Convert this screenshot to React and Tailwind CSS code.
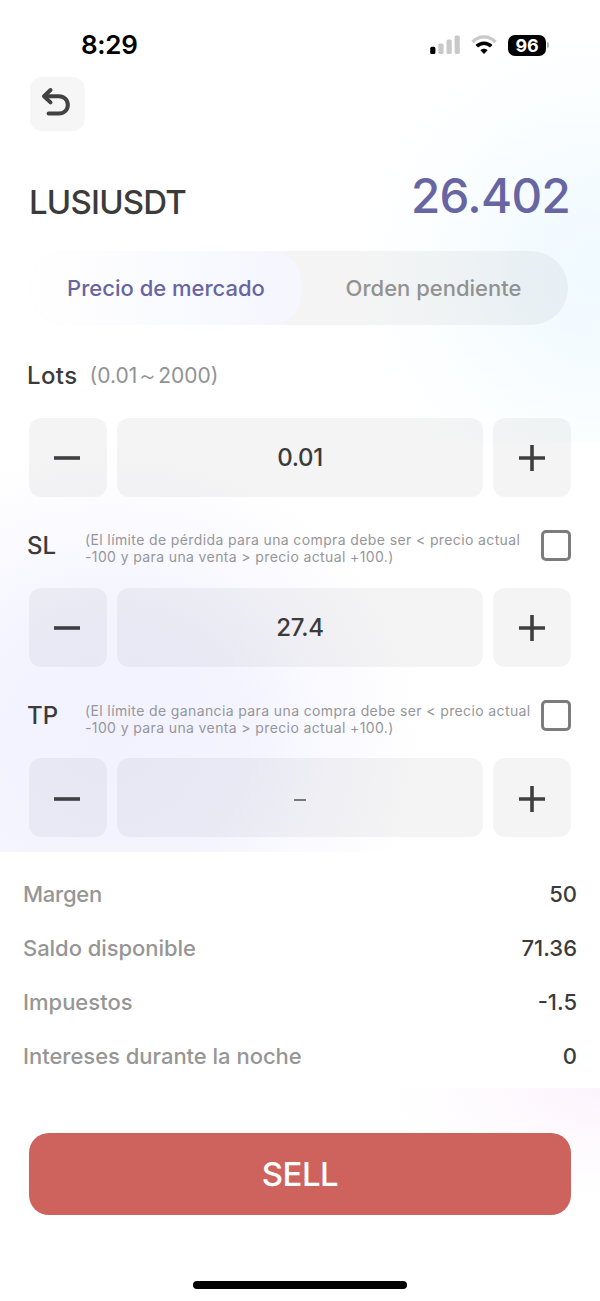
import React, { useState } from 'react';

const summary = [
  { label: 'Margen', value: '50', labelClass: 'tracking-[-0.25px]' },
  { label: 'Saldo disponible', value: '71.36', labelClass: 'tracking-[-0.05px]' },
  { label: 'Impuestos', value: '-1.5', labelClass: 'tracking-[0px]' },
  { label: 'Intereses durante la noche', value: '0', labelClass: 'tracking-[-0.02px]' },
];

const StatusBar = () => (
  <div className="h-[77px] pt-[28px] pl-[81px] pr-[51px] flex items-start justify-between text-black">
    <span className="text-[26px] leading-[34px] font-semibold tracking-[-0.3px]">8:29</span>
    <div className="flex items-center h-[34px]">
      <svg width="30" height="20" viewBox="0 0 30 20">
        <rect x="0.2" y="11.8" width="5.2" height="7.2" rx="1.6" fill="#000" />
        <rect x="8.4" y="8.4" width="5.2" height="10.6" rx="1.6" fill="#c9c9c9" />
        <rect x="16.5" y="4.4" width="5.2" height="14.6" rx="1.6" fill="#c9c9c9" />
        <rect x="24.6" y="0.4" width="5.2" height="18.6" rx="1.6" fill="#c9c9c9" />
      </svg>
      <svg className="ml-[11px]" width="26" height="20" viewBox="0 0 26 20" fill="none">
        <path d="M1.6 7C8 0.2 18 0.2 24.4 7" stroke="#c9c9c9" strokeWidth="3.4" />
        <path d="M5.8 11.3C9.8 7.2 16.2 7.2 20.2 11.3" stroke="#000" strokeWidth="3.6" />
        <path d="M9.4 15.2C11.4 13.2 14.6 13.2 16.6 15.2L13 18.9Z" fill="#000" />
      </svg>
      <div className="ml-[11px] w-[38px] h-[21px] rounded-[7px] bg-black text-white text-[18px] leading-[21px] font-bold text-center tracking-[-0.3px]">
        96
      </div>
      <span className="ml-[1px] w-[2px] h-[6px] rounded-r-full bg-[#b5b5b5]" />
    </div>
  </div>
);

const Stepper = ({ value, muted }) => (
  <div className="h-[78.5px] flex gap-[10px] text-[#3b3b3b]">
    <button className="w-[78px] rounded-[12px] bg-black/[0.045] flex items-center justify-center">
      <svg className="mt-[2px] mr-[2px]" width="26" height="26" viewBox="0 0 26 26" stroke="#3f3f42" strokeWidth="3.6">
        <path d="M0 13H26" />
      </svg>
    </button>
    <div className="flex-1 pt-[1px] rounded-[12px] bg-black/[0.045] flex items-center justify-center text-[24px] font-medium tracking-[-0.3px]">
      {muted ? <span className="w-[12px] h-[2px] mt-[4px] bg-[#77777c]" /> : value}
    </div>
    <button className="w-[78px] rounded-[12px] bg-black/[0.045] flex items-center justify-center">
      <svg className="mt-[2px]" width="26" height="26" viewBox="0 0 26 26" stroke="#3f3f3f" strokeWidth="3.6">
        <path d="M0 13H26M13 0V26" />
      </svg>
    </button>
  </div>
);

const LimitLabel = ({ name, lines }) => {
  const [checked, setChecked] = useState(false);

  return (
    <div className="h-[91.7px] -mx-[2px] pr-[2px] pt-[6px] flex items-center">
      <span className="w-[58px] shrink-0 mt-[1px] text-[24px] font-medium tracking-[0px] text-[#3b3b3b]">{name}</span>
      <p className="w-0 flex-1 mt-[6px] text-[14px] leading-[17px] tracking-[0.38px] text-[#96969a] whitespace-nowrap">
        {lines[0]}
        <br />
        {lines[1]}
      </p>
      <button
        onClick={() => setChecked(!checked)}
        className={`w-[30px] h-[31px] shrink-0 rounded-[5px] border-3 border-[#7c7c7c] ${checked ? 'bg-[#6765a2]' : 'bg-white'}`}
      />
    </div>
  );
};

const App = () => {
  const [tab, setTab] = useState('market');

  return (
    <div className="relative w-[600px] h-[1301px] overflow-hidden bg-white font-['Inter',sans-serif]">
      {/* soft colour glows */}
      <div className="absolute right-0 top-0 w-[280px] h-[443px] bg-[radial-gradient(circle_240px_at_280px_270px,#f0faff_0%,#f4fbff_35%,#fbfeff_70%,#ffffff_100%)]" />
      <div className="absolute left-0 top-[450px] w-[600px] h-[402px] bg-[radial-gradient(ellipse_310px_290px_at_110px_290px,#f2f2ff_0%,#f4f4ff_45%,#fafaff_72%,#ffffff00_100%)]" />
      <div className="absolute right-0 top-[1088px] w-[230px] h-[120px] bg-[radial-gradient(ellipse_210px_110px_at_230px_0px,#fcf4fd_0%,#fefafe_50%,#ffffff_100%)]" />

      <div className="relative flex flex-col">
        <StatusBar />

        <div className="px-[30px]">
          <button className="w-[55px] h-[54px] pr-[4px] pb-[4px] rounded-[12px] bg-[#f6f6f6] flex items-center justify-center">
            <svg width="30" height="30" viewBox="0 0 30 30" fill="none" stroke="#424242" strokeWidth="4" strokeLinecap="round" strokeLinejoin="round">
              <path d="M9.5 3L3 9.2L9.5 15.4" />
              <path d="M4 9.2H17.8C23 9.2 26.8 12.8 26.8 17.9C26.8 23 23 26.6 17.8 26.6H7.6" />
            </svg>
          </button>
        </div>

        <div className="h-[120px] pl-[29px] pr-[31px] pt-[34px] flex items-start justify-between">
          <h1 className="mt-[17px] text-[33px] leading-[40px] font-medium tracking-[-0.8px] text-[#3b3b3b]">LUSIUSDT</h1>
          <span className="-mr-[1px] mt-[1px] text-[47.5px] leading-[60px] font-medium tracking-[-0.7px] text-[#6765a2]">26.402</span>
        </div>

        <div className="ml-[30px] w-[538px] h-[74px] rounded-full bg-black/[0.045] flex overflow-hidden text-[22px] font-medium">
          <button
            onClick={() => setTab('market')}
            className="w-[271px] rounded-r-[30px] pl-[1px] bg-linear-to-r from-white to-[#f5f6fe] text-[#6765a2]"
          >
            Precio de mercado
          </button>
          <button onClick={() => setTab('pending')} className="flex-1 pr-[2px] text-[#929292]">
            Orden pendiente
          </button>
        </div>

        <div className="px-[29px]">
          <div className="h-[93px] -ml-[2px] pt-[8px] flex items-center">
            <span className="text-[24px] font-medium tracking-[0.4px] text-[#3b3b3b]">Lots</span>
            <span className="ml-[12px] text-[21px] tracking-[0px] text-[#929296]">(0.01～2000)</span>
          </div>
          <Stepper value="0.01" />
          <LimitLabel
            name="SL"
            lines={['(El límite de pérdida para una compra debe ser < precio actual', '-100 y para una venta > precio actual +100.)']}
          />
          <Stepper value="27.4" />
          <LimitLabel
            name="TP"
            lines={['(El límite de ganancia para una compra debe ser < precio actual', '-100 y para una venta > precio actual +100.)']}
          />
          <Stepper muted />
        </div>

        <div className="mt-[15px] h-[236px] px-[23px] pt-[16px] bg-white text-[22px] font-medium">
          {summary.map((row) => (
            <div key={row.label} className="h-[54px] flex items-center justify-between">
              <span className={`text-[#969696] ${row.labelClass}`}>{row.label}</span>
              <span className="text-[#3b3b3b]">{row.value}</span>
            </div>
          ))}
        </div>

        <button className="mx-[29px] mt-[45px] pt-[2px] h-[82px] rounded-[20px] bg-[#cd635c] text-white text-[33px] font-medium tracking-[-0.5px]">
          SELL
        </button>
        <div className="mx-auto mt-[66px] w-[214px] h-[8px] rounded-full bg-black" />
      </div>
    </div>
  );
};

export default App;
